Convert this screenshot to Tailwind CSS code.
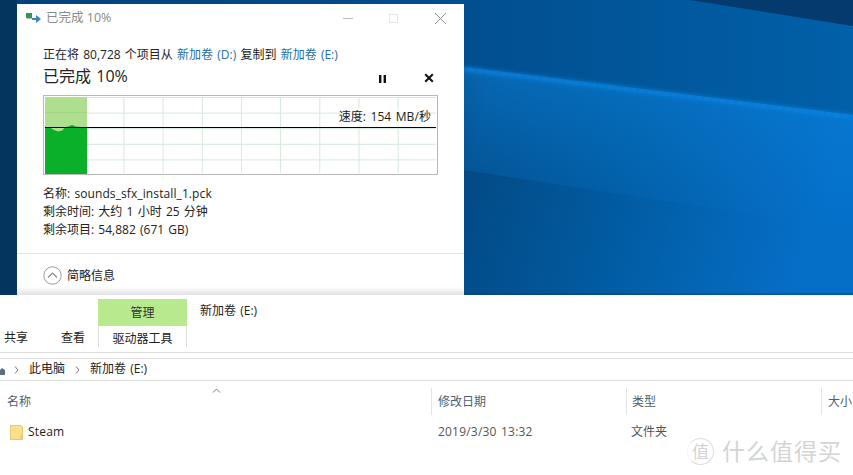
<!DOCTYPE html>
<html lang="zh-CN">
<head>
<meta charset="utf-8">
<script src="https://cdn.jsdelivr.net/npm/@tailwindcss/browser@4"></script>
</head>
<body class="m-0 bg-white">
<div class="w-[853px] h-[475px] overflow-hidden flex flex-col bg-white text-[12px] leading-[18px] text-[#222] [word-spacing:1.1px] font-['Open_Sans','Noto_Sans_CJK_SC',sans-serif]">
  <!-- desktop -->
  <div class="relative h-[295px] shrink-0 pl-[17px] pt-[4px]">
    <svg class="absolute inset-0" width="853" height="295" viewBox="0 0 853 295" preserveAspectRatio="none">
      <defs>
        <linearGradient id="low" x1="0" y1="0" x2="1" y2="0.15"><stop offset="0" stop-color="#033c6c"/><stop offset="0.08" stop-color="#034a86"/><stop offset="0.45" stop-color="#015a9f"/><stop offset="0.8" stop-color="#0468ba"/><stop offset="1" stop-color="#056fc8"/></linearGradient>
        <linearGradient id="up" x1="0" y1="0" x2="1" y2="0"><stop offset="0" stop-color="#03427a"/><stop offset="0.5" stop-color="#014d8d"/><stop offset="1" stop-color="#0160a8"/></linearGradient>
        <linearGradient id="sheen" x1="0" y1="0" x2="0" y2="1"><stop offset="0" stop-color="#0a82dd" stop-opacity="0.55"/><stop offset="1" stop-color="#0a82dd" stop-opacity="0"/></linearGradient>
        <filter id="bl"><feGaussianBlur stdDeviation="2"/></filter>
      </defs>
      <rect width="853" height="295" fill="url(#up)"/>
      <polygon points="464,67 853,115 853,295 464,295" fill="url(#low)"/>
      <polygon points="464,67 853,115 853,230 464,170" fill="url(#sheen)"/>
      <polygon points="690,0 853,0 853,26" fill="#043a6e"/>
      <line x1="464" y1="69" x2="853" y2="117" stroke="#0b82e0" stroke-width="4" filter="url(#bl)"/>
      <rect width="17" height="295" fill="#04355f"/>
      <rect y="293" width="853" height="2" fill="#0a3a5c" opacity=".4"/>
    </svg>
    <div class="relative w-[447px] h-[291px] bg-white flex flex-col">
      <!-- title bar -->
      <div class="h-[28px] flex items-center shrink-0 pl-[9px]">
        <svg width="15" height="12" viewBox="0 0 15 12" class="mr-[5px]"><rect x="0" y="1" width="6" height="5" fill="#2f9a4c"/><rect x="1" y="6" width="5" height="1" fill="#bbb"/><path d="M6 6h4V3l5 4-5 4V8H6z" fill="#3d86b8"/></svg>
        <span class="text-[#8a8a8a] text-[12.5px] [word-spacing:0]">已完成 10%</span>
        <div class="ml-auto flex items-center h-full">
          <svg width="12" height="12" viewBox="0 0 12 12" class="mr-[34px]"><line x1="1" y1="6.5" x2="11" y2="6.5" stroke="#bbb"/></svg>
          <svg width="11" height="11" viewBox="0 0 11 11" class="mr-[35px]"><rect x="1.5" y="1.5" width="8" height="8" fill="none" stroke="#e6e6e6"/></svg>
          <svg width="13" height="13" viewBox="0 0 13 13" class="mr-[17px]"><path d="M1 1l11 11M12 1L1 12" stroke="#8f8f8f" fill="none"/></svg>
        </div>
      </div>
      <!-- body -->
      <div class="px-[26px] pt-[14px]">
        <p class="h-[18px] whitespace-nowrap">正在将 80,728 个项目从 <span class="text-[#1f6e9e]">新加卷 (D:)</span> 复制到 <span class="text-[#1f6e9e]">新加卷 (E:)</span></p>
        <div class="flex items-center h-[26px] mt-[1px]">
          <span class="text-[16px] -mt-[4px]">已完成 10%</span>
          <svg width="9" height="9" viewBox="0 0 9 9" class="ml-auto mr-[37px]"><path d="M1 1h2.4v8H1zM5.6 1H8v8H5.6z" fill="#111"/></svg>
          <svg width="10" height="10" viewBox="0 0 10 10" class="mr-[4px]"><path d="M1.2 1.2l7.6 7.6M8.8 1.2L1.2 8.8" stroke="#111" stroke-width="2"/></svg>
        </div>
        <!-- chart -->
        <div class="relative mt-[4px] w-[395px] h-[80px] border border-[#b9b9b9] bg-white p-px">
          <div class="relative w-full h-full bg-[linear-gradient(to_right,#d3e8da_1px,transparent_1px),linear-gradient(to_bottom,#d3e8da_1px,transparent_1px)] bg-[size:39.2px_15.6px]">
            <svg class="absolute left-0 top-0" width="42" height="77" viewBox="0 0 42 77">
              <rect width="42" height="40" fill="#addf8f"/>
              <line x1="0" y1="15.5" x2="42" y2="15.5" stroke="#9ed583"/>
              <path d="M0 31 L5 30.5 L9 33 L13 34.5 L17 33.5 L20 30.5 L27 28 L31 29.5 L36 30 L42 30 V77 H0 Z" fill="#0bb02a"/>
            </svg>
            <div class="absolute left-0 right-0 top-[30px] h-px bg-black"></div>
            <span class="absolute right-[5px] top-[11px] whitespace-nowrap bg-white/60 leading-[18px] tracking-[0.1px]">速度: 154 MB/秒</span>
          </div>
        </div>
        <!-- details -->
        <div class="mt-[10px] leading-[18px]">
          <p>名称: <span class="tracking-[0.1px]">sounds_sfx_install_1.pck</span></p>
          <p>剩余时间: 大约 1 小时 25 分钟</p>
          <p>剩余项目: 54,882 (671 GB)</p>
        </div>
      </div>
      <!-- footer -->
      <div class="mt-auto h-[42px] border-t border-[#e3e3e3] pl-[26px] pt-[2px] flex items-center gap-[5px] bg-[linear-gradient(to_bottom,#fff_80%,#e2e2e2)]">
        <svg width="19" height="19" viewBox="0 0 19 19"><circle cx="9.5" cy="9.5" r="8.7" fill="#fff" stroke="#9a9a9a"/><path d="M5 11.5l4.5-4.5 4.5 4.5" fill="none" stroke="#8a8a8a" stroke-width="1.2"/></svg>
        <span>简略信息</span>
      </div>
    </div>
  </div>
  <!-- explorer -->
  <div class="flex-1 flex flex-col bg-white">
    <!-- ribbon -->
    <div class="h-[58px] shrink-0 border-b border-[#dcdcdc] flex items-end pb-[5px] relative">
      <div class="flex items-center h-[21px] pt-[3px] pl-[4px] gap-[33px] w-[98px]">
        <span>共享</span><span>查看</span>
      </div>
      <div class="w-[89px] h-[48px] flex flex-col text-center">
        <div class="h-[27px] bg-[#b9e98f] leading-[28px] text-[#333]">管理</div>
        <div class="h-[21px] border-x border-[#dcdcdc] leading-[25px]">驱动器工具</div>
      </div>
      <span class="self-start ml-[13px] mt-[7px]">新加卷 (E:)</span>
    </div>
    <!-- address -->
    <div class="h-[23px] mt-[5px] shrink-0 border-y border-[#dcdcdc] flex items-center">
      <svg width="5" height="8" viewBox="0 0 5 8" class="mr-[9px] mt-[3px]"><path d="M0 3l2-2 3 2v5H0z" fill="#5a7080"/></svg>
      <svg width="5" height="8" viewBox="0 0 5 8" class="mr-[10px]"><path d="M1 0.5l3 3.5-3 3.5" fill="none" stroke="#777"/></svg>
      <span class="-mt-[1px]">此电脑</span>
      <svg width="5" height="8" viewBox="0 0 5 8" class="mx-[10px]"><path d="M1 0.5l3 3.5-3 3.5" fill="none" stroke="#777"/></svg>
      <span class="-mt-[1px]">新加卷 (E:)</span>
    </div>
    <!-- columns -->
    <div class="relative flex-1 flex flex-col">
      <svg width="9" height="5" viewBox="0 0 9 5" class="absolute left-[212px] top-[7px]"><path d="M1 4.5l3.5-3.5 3.5 3.5" fill="none" stroke="#777"/></svg>
      <div class="grid grid-cols-[431px_195px_195px_1fr] mt-[7px] h-[27px] text-[#4c6072]">
        <div class="pl-[7px] flex items-center">名称</div>
        <div class="pl-[6px] flex items-center border-l border-[#e3e3e3]">修改日期</div>
        <div class="pl-[5px] flex items-center border-l border-[#e3e3e3]">类型</div>
        <div class="pl-[6px] flex items-center border-l border-[#e3e3e3] whitespace-nowrap overflow-hidden">大小</div>
      </div>
      <div class="grid grid-cols-[431px_195px_195px_1fr] mt-[6px] h-[22px] items-center text-[#555]">
        <div class="pl-[10px] flex items-center gap-[5px] text-[#222]">
          <svg width="13" height="15" viewBox="0 0 13 15"><path d="M0.5 0.5h10.5l1.5 1.5v12.5H0.5z" fill="#f9e08f" stroke="#e8c96a"/><path d="M11 9.5v5" stroke="#e4c566"/></svg>
          <span class="tracking-[0.2px]">Steam</span>
        </div>
        <div class="pl-[7px] tracking-[0.2px]">2019/3/30 13:32</div>
        <div class="pl-[5px]">文件夹</div>
      </div>
      <!-- watermark -->
      <div class="absolute left-[687px] top-[57px] flex items-center gap-[8px] text-[#d4d4d4] leading-none">
        <div class="w-[27px] h-[27px] rounded-full border border-[#ddd] border-l-[#f4f4f4] flex items-center justify-center text-[17px]">值</div>
        <span class="text-[23px] tracking-[1px] whitespace-nowrap">什么值得买</span>
      </div>
    </div>
  </div>
</div>
</body>
</html>
